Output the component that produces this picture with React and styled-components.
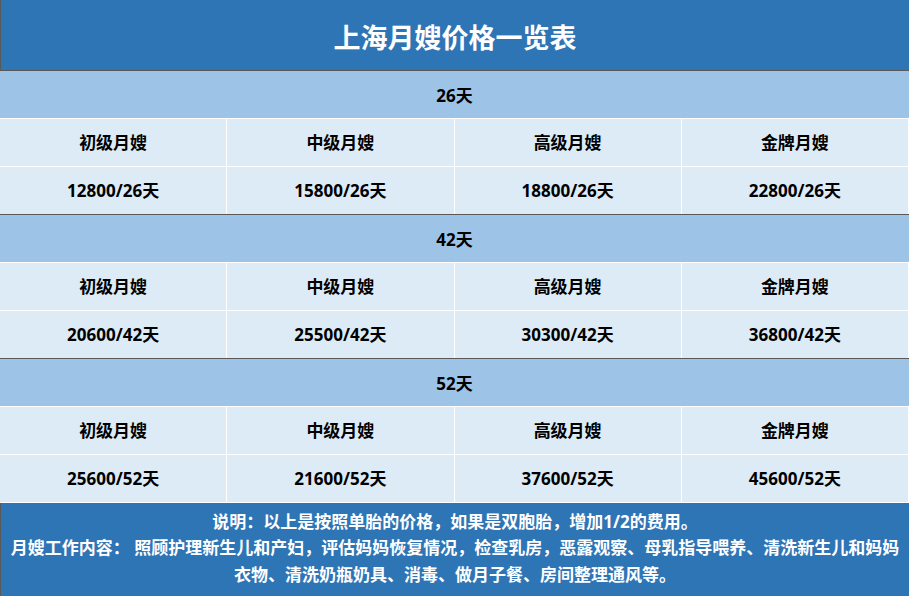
import styled, { createGlobalStyle } from "styled-components";

const GlobalStyle = createGlobalStyle`
    * {
        box-sizing: border-box;
    }
    body {
        margin: 0;
        background: #ffffff;
        font-family: "Open Sans", "Noto Sans CJK SC", "Microsoft YaHei", sans-serif;
    }
`

const levels = ["初级月嫂", "中级月嫂", "高级月嫂", "金牌月嫂"];

const groups = [
    { days: 26, prices: [12800, 15800, 18800, 22800] },
    { days: 42, prices: [20600, 25500, 30300, 36800] },
    { days: 52, prices: [25600, 21600, 37600, 45600] },
];

const App = () =>
{
    return (
        <>
            <GlobalStyle />
            <Table>
                <Title>上海月嫂价格一览表</Title>
                {groups.map((group, i) => {
                    const last = i === groups.length - 1;
                    return (
                        <Group key={group.days}>
                            <SectionHead>{group.days}天</SectionHead>
                            <Row>
                                {levels.map((level) => (
                                    <Cell key={level}>{level}</Cell>
                                ))}
                            </Row>
                            <Row $dark={!last}>
                                {group.prices.map((price, j) => (
                                    <Cell key={j}>{price}/{group.days}天</Cell>
                                ))}
                            </Row>
                        </Group>
                    )
                })}
                <Footer>
                    说明：以上是按照单胎的价格，如果是双胞胎，增加1/2的费用。<br />
                    月嫂工作内容： 照顾护理新生儿和产妇，评估妈妈恢复情况，检查乳房，恶露观察、母乳指导喂养、清洗新生儿和妈妈<br />
                    衣物、清洗奶瓶奶具、消毒、做月子餐、房间整理通风等。
                </Footer>
            </Table>
        </>
    )
}

const Table = styled.div`
    width: 909px;
    height: 596px;
    display: flex;
    flex-direction: column;
    overflow: hidden;
`

const Title = styled.div`
    height: 71px;
    flex-shrink: 0;
    display: flex;
    align-items: center;
    justify-content: center;
    background-color: #2e75b6;
    border-left: 1px solid #595959;
    border-bottom: 1px solid #595959;
    color: #ffffff;
    font-size: 27px;
    font-weight: bold;
    padding-top: 3px;
`

const Group = styled.div`
    display: flex;
    flex-direction: column;
`

const SectionHead = styled.div`
    height: 48px;
    display: flex;
    align-items: center;
    justify-content: center;
    background-color: #9dc3e6;
    border-bottom: 1px solid #ffffff;
    font-size: 17px;
    font-weight: bold;
    color: #000000;
    padding-bottom: 1px;
`

const Row = styled.div`
    height: 48px;
    display: grid;
    grid-template-columns: repeat(4, 1fr);
    border-bottom: 1px solid ${(props) => (props.$dark ? "#595959" : "#ffffff")};
    background-color: #ddebf7;
`

const Cell = styled.div`
    display: flex;
    align-items: center;
    justify-content: center;
    border-right: 1px solid #ffffff;
    font-size: 17px;
    font-weight: bold;
    color: #000000;
    padding-bottom: 2px;
`

const Footer = styled.div`
    flex: 1;
    display: flex;
    flex-direction: column;
    justify-content: center;
    text-align: center;
    background-color: #2e75b6;
    border-left: 1px solid #595959;
    color: #ffffff;
    font-size: 17px;
    font-weight: bold;
    line-height: 26.5px;
    white-space: nowrap;
    padding-bottom: 2px;
`

export default App;
